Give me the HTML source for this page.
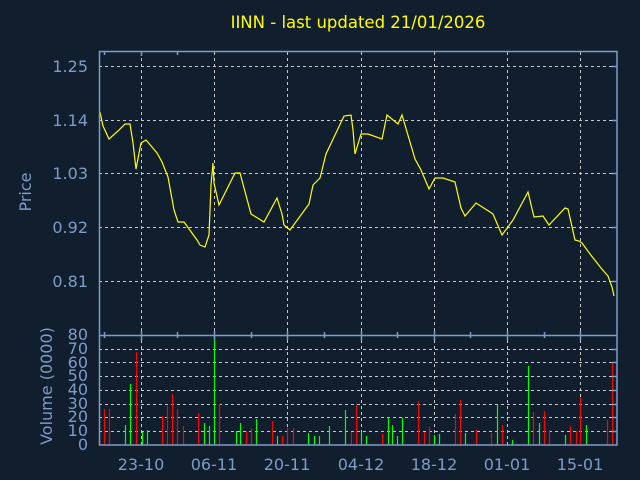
<!DOCTYPE html>
<html><head><meta charset="utf-8"><style>
html,body{margin:0;padding:0;background:#111e2e;}
svg{display:block}
text{font-family:"DejaVu Sans","Liberation Sans",sans-serif;}
</style></head><body>
<svg width="640" height="480" xmlns="http://www.w3.org/2000/svg">
<rect width="640" height="480" fill="#111e2e"/>
<text x="358" y="28" fill="#ffff00" font-size="16.5" text-anchor="middle">IINN - last updated 21/01/2026</text>
<g stroke="#c8c8c8" stroke-width="1" stroke-dasharray="3,3">
<line x1="99" y1="66.5" x2="617" y2="66.5"/>
<line x1="99" y1="120.5" x2="617" y2="120.5"/>
<line x1="99" y1="173.5" x2="617" y2="173.5"/>
<line x1="99" y1="227.5" x2="617" y2="227.5"/>
<line x1="99" y1="281.5" x2="617" y2="281.5"/>
<line x1="99" y1="349.5" x2="617" y2="349.5"/>
<line x1="99" y1="362.5" x2="617" y2="362.5"/>
<line x1="99" y1="376.5" x2="617" y2="376.5"/>
<line x1="99" y1="390.5" x2="617" y2="390.5"/>
<line x1="99" y1="404.5" x2="617" y2="404.5"/>
<line x1="99" y1="417.5" x2="617" y2="417.5"/>
<line x1="99" y1="431.5" x2="617" y2="431.5"/>
<line x1="141.5" y1="52" x2="141.5" y2="445"/>
<line x1="214.5" y1="52" x2="214.5" y2="445"/>
<line x1="287.5" y1="52" x2="287.5" y2="445"/>
<line x1="361.5" y1="52" x2="361.5" y2="445"/>
<line x1="434.5" y1="52" x2="434.5" y2="445"/>
<line x1="507.5" y1="52" x2="507.5" y2="445"/>
<line x1="580.5" y1="52" x2="580.5" y2="445"/>
</g>
<g stroke-width="1.2">
<g stroke="#ff0000">
<line x1="104.5" y1="409" x2="104.5" y2="445"/><line x1="109.5" y1="409" x2="109.5" y2="445"/>
<line x1="136.5" y1="352" x2="136.5" y2="445"/><line x1="162.5" y1="416" x2="162.5" y2="445"/>
<line x1="167.5" y1="406" x2="167.5" y2="445"/><line x1="172.5" y1="394" x2="172.5" y2="445"/>
<line x1="177.5" y1="409" x2="177.5" y2="445"/><line x1="183.5" y1="426" x2="183.5" y2="445"/>
<line x1="198.5" y1="413" x2="198.5" y2="445"/><line x1="219.5" y1="404" x2="219.5" y2="445"/>
<line x1="246.5" y1="431" x2="246.5" y2="445"/><line x1="251.5" y1="428" x2="251.5" y2="445"/>
<line x1="272.5" y1="421" x2="272.5" y2="445"/><line x1="282.5" y1="436" x2="282.5" y2="445"/>
<line x1="287.5" y1="428" x2="287.5" y2="445"/><line x1="293.5" y1="428" x2="293.5" y2="445"/>
<line x1="351.5" y1="432" x2="351.5" y2="445"/><line x1="356.5" y1="405" x2="356.5" y2="445"/>
<line x1="382.5" y1="434" x2="382.5" y2="445"/><line x1="418.5" y1="401" x2="418.5" y2="445"/>
<line x1="424.5" y1="432" x2="424.5" y2="445"/><line x1="429.5" y1="427" x2="429.5" y2="445"/>
<line x1="455.5" y1="414" x2="455.5" y2="445"/><line x1="460.5" y1="400" x2="460.5" y2="445"/>
<line x1="476.5" y1="430" x2="476.5" y2="445"/><line x1="491.5" y1="433" x2="491.5" y2="445"/>
<line x1="502.5" y1="425" x2="502.5" y2="445"/><line x1="533.5" y1="412" x2="533.5" y2="445"/>
<line x1="544.5" y1="411" x2="544.5" y2="445"/><line x1="549.5" y1="430" x2="549.5" y2="445"/>
<line x1="570.5" y1="426" x2="570.5" y2="445"/><line x1="576.5" y1="431" x2="576.5" y2="445"/>
<line x1="580.5" y1="398" x2="580.5" y2="445"/><line x1="607.5" y1="420" x2="607.5" y2="445"/>
<line x1="612.5" y1="362" x2="612.5" y2="445"/>
</g>
<g stroke="#00ff00">
<line x1="125.5" y1="425" x2="125.5" y2="445"/><line x1="130.5" y1="384" x2="130.5" y2="445"/>
<line x1="142.5" y1="432" x2="142.5" y2="445"/><line x1="147.5" y1="430" x2="147.5" y2="445"/>
<line x1="204.5" y1="423" x2="204.5" y2="445"/><line x1="209.5" y1="426" x2="209.5" y2="445"/>
<line x1="214.5" y1="336" x2="214.5" y2="445"/><line x1="236.5" y1="431" x2="236.5" y2="445"/>
<line x1="240.5" y1="423" x2="240.5" y2="445"/><line x1="256.5" y1="419" x2="256.5" y2="445"/>
<line x1="277.5" y1="436" x2="277.5" y2="445"/><line x1="308.5" y1="433" x2="308.5" y2="445"/>
<line x1="314.5" y1="436" x2="314.5" y2="445"/><line x1="319.5" y1="436" x2="319.5" y2="445"/>
<line x1="329.5" y1="426" x2="329.5" y2="445"/><line x1="345.5" y1="410" x2="345.5" y2="445"/>
<line x1="361.5" y1="432" x2="361.5" y2="445"/><line x1="366.5" y1="436" x2="366.5" y2="445"/>
<line x1="388.5" y1="417" x2="388.5" y2="445"/><line x1="392.5" y1="425" x2="392.5" y2="445"/>
<line x1="397.5" y1="436" x2="397.5" y2="445"/><line x1="402.5" y1="418" x2="402.5" y2="445"/>
<line x1="434.5" y1="435" x2="434.5" y2="445"/><line x1="439.5" y1="434" x2="439.5" y2="445"/>
<line x1="465.5" y1="433" x2="465.5" y2="445"/><line x1="497.5" y1="405" x2="497.5" y2="445"/>
<line x1="512.5" y1="440" x2="512.5" y2="445"/><line x1="528.5" y1="366" x2="528.5" y2="445"/>
<line x1="539.5" y1="423" x2="539.5" y2="445"/><line x1="565.5" y1="435" x2="565.5" y2="445"/>
<line x1="586.5" y1="425" x2="586.5" y2="445"/>
</g>
</g>
<polyline fill="none" stroke="#ffff00" stroke-width="1.2" points="100,112 103,126 109,139 118,131 125,124 130,124 133,143 136,169 141,143 146,140 152,147 157,153 162,162 168,177 174,210 178,222 184,222 197,240 200,245 205,247 209,235 211,185 213,163 214,183 219,205 235,173 240,173 251,214 264,222 277,198 282,214 284,225 290,230 309,204 313,185 320,178 326,154 344,116 351,115 353,130 355,154 361,134 368,134 382,139 387,115 398,124 402,115 415,159 421,170 429,189 435,178 443,178 455,182 461,208 465,216 476,203 490,212 493,214 502,235 513,220 528,192 534,217 543,216 549,225 565,208 568,209 575,240 579,241 582,243 590,254 601,268 608,276 612,287 614,296"/>
<g stroke="#7d9cc8" stroke-width="1.5" fill="none">
<rect x="99.5" y="51.5" width="517.5" height="393.5"/>
<line x1="99" y1="335.5" x2="617" y2="335.5"/>
<path d="M141.5,331V340M214.5,331V340M287.5,331V340M361.5,331V340M434.5,331V340M507.5,331V340M580.5,331V340"/>
<path d="M104.5,332V338M177.5,332V338M251.5,332V338M324.5,332V338M397.5,332V338M470.5,332V338M544.5,332V338"/>
<path d="M141.5,52V56M104.5,52V55M177.5,52V55"/>
<path d="M612,66.5H617M612,120.5H617M612,173.5H617M612,227.5H617M612,281.5H617M612,349.5H617M612,362.5H617M612,376.5H617M612,390.5H617M612,404.5H617M612,417.5H617M612,431.5H617"/>
</g>
<g fill="#7d9cc8" font-size="16" text-anchor="end">
<text x="88" y="72">1.25</text><text x="88" y="126">1.14</text><text x="88" y="179">1.03</text>
<text x="88" y="233">0.92</text><text x="88" y="287">0.81</text>
<text x="88" y="340">80</text><text x="88" y="354">70</text><text x="88" y="368">60</text>
<text x="88" y="381">50</text><text x="88" y="395">40</text><text x="88" y="409">30</text>
<text x="88" y="422">20</text><text x="88" y="436">10</text><text x="88" y="450">0</text>
</g>
<g fill="#7d9cc8" font-size="16" text-anchor="middle">
<text x="141" y="470">23-10</text><text x="214" y="470">06-11</text><text x="287" y="470">20-11</text>
<text x="361" y="470">04-12</text><text x="434" y="470">18-12</text><text x="507" y="470">01-01</text>
<text x="580" y="470">15-01</text>
</g>
<text transform="translate(31,192) rotate(-90)" fill="#7d9cc8" font-size="16" text-anchor="middle">Price</text>
<text transform="translate(52,386) rotate(-90)" fill="#7d9cc8" font-size="16" text-anchor="middle">Volume (0000)</text>
</svg>
</body></html>
